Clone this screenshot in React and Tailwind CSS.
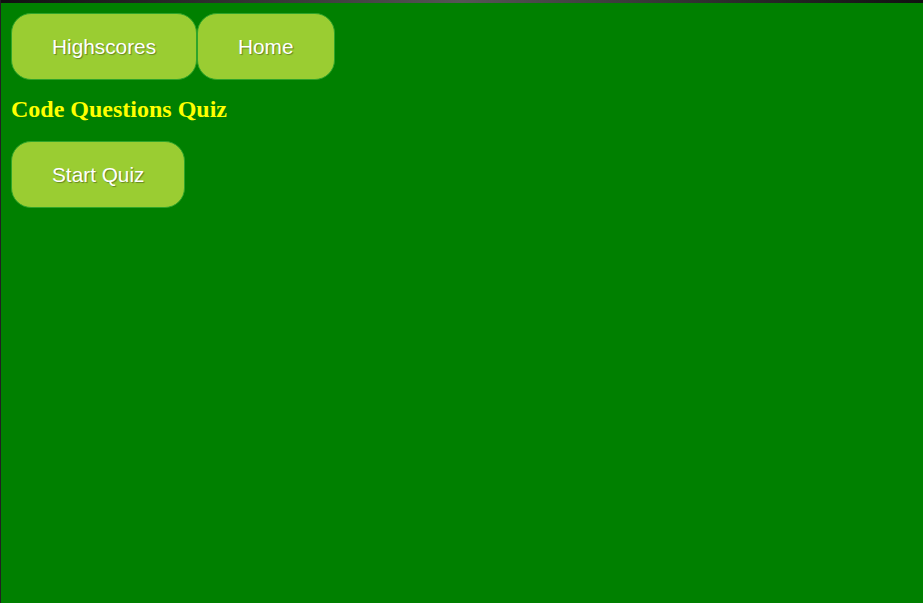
function QuizButton({ children }) {
  return (
    <button className="rounded-[20px] border border-[#2fa52a] bg-[#9acd32] px-[40px] py-[20.5px] font-['Liberation_Sans',Arial,sans-serif] text-[20.8px] leading-[24px] text-white [text-shadow:1px_1px_1px_rgba(0,0,0,0.35)]">
      {children}
    </button>
  );
}

export default function App() {
  return (
    <div className="min-h-[603px] w-full border-l border-[#222] bg-[#008000]">
      <div className="h-[3px] w-full bg-gradient-to-r from-[#111] via-[#555] to-[#111]" />
      <div className="pl-[10px] pt-[10px]">
        <nav className="flex gap-0">
          <QuizButton>Highscores</QuizButton>
          <QuizButton>Home</QuizButton>
        </nav>
        <h1 className="mt-[15px] font-['Liberation_Serif','Times_New_Roman',serif] text-[24px] font-bold leading-[28px] text-[#ffff00]">
          Code Questions Quiz
        </h1>
        <div className="mt-[18px]">
          <QuizButton>Start Quiz</QuizButton>
        </div>
      </div>
    </div>
  );
}
